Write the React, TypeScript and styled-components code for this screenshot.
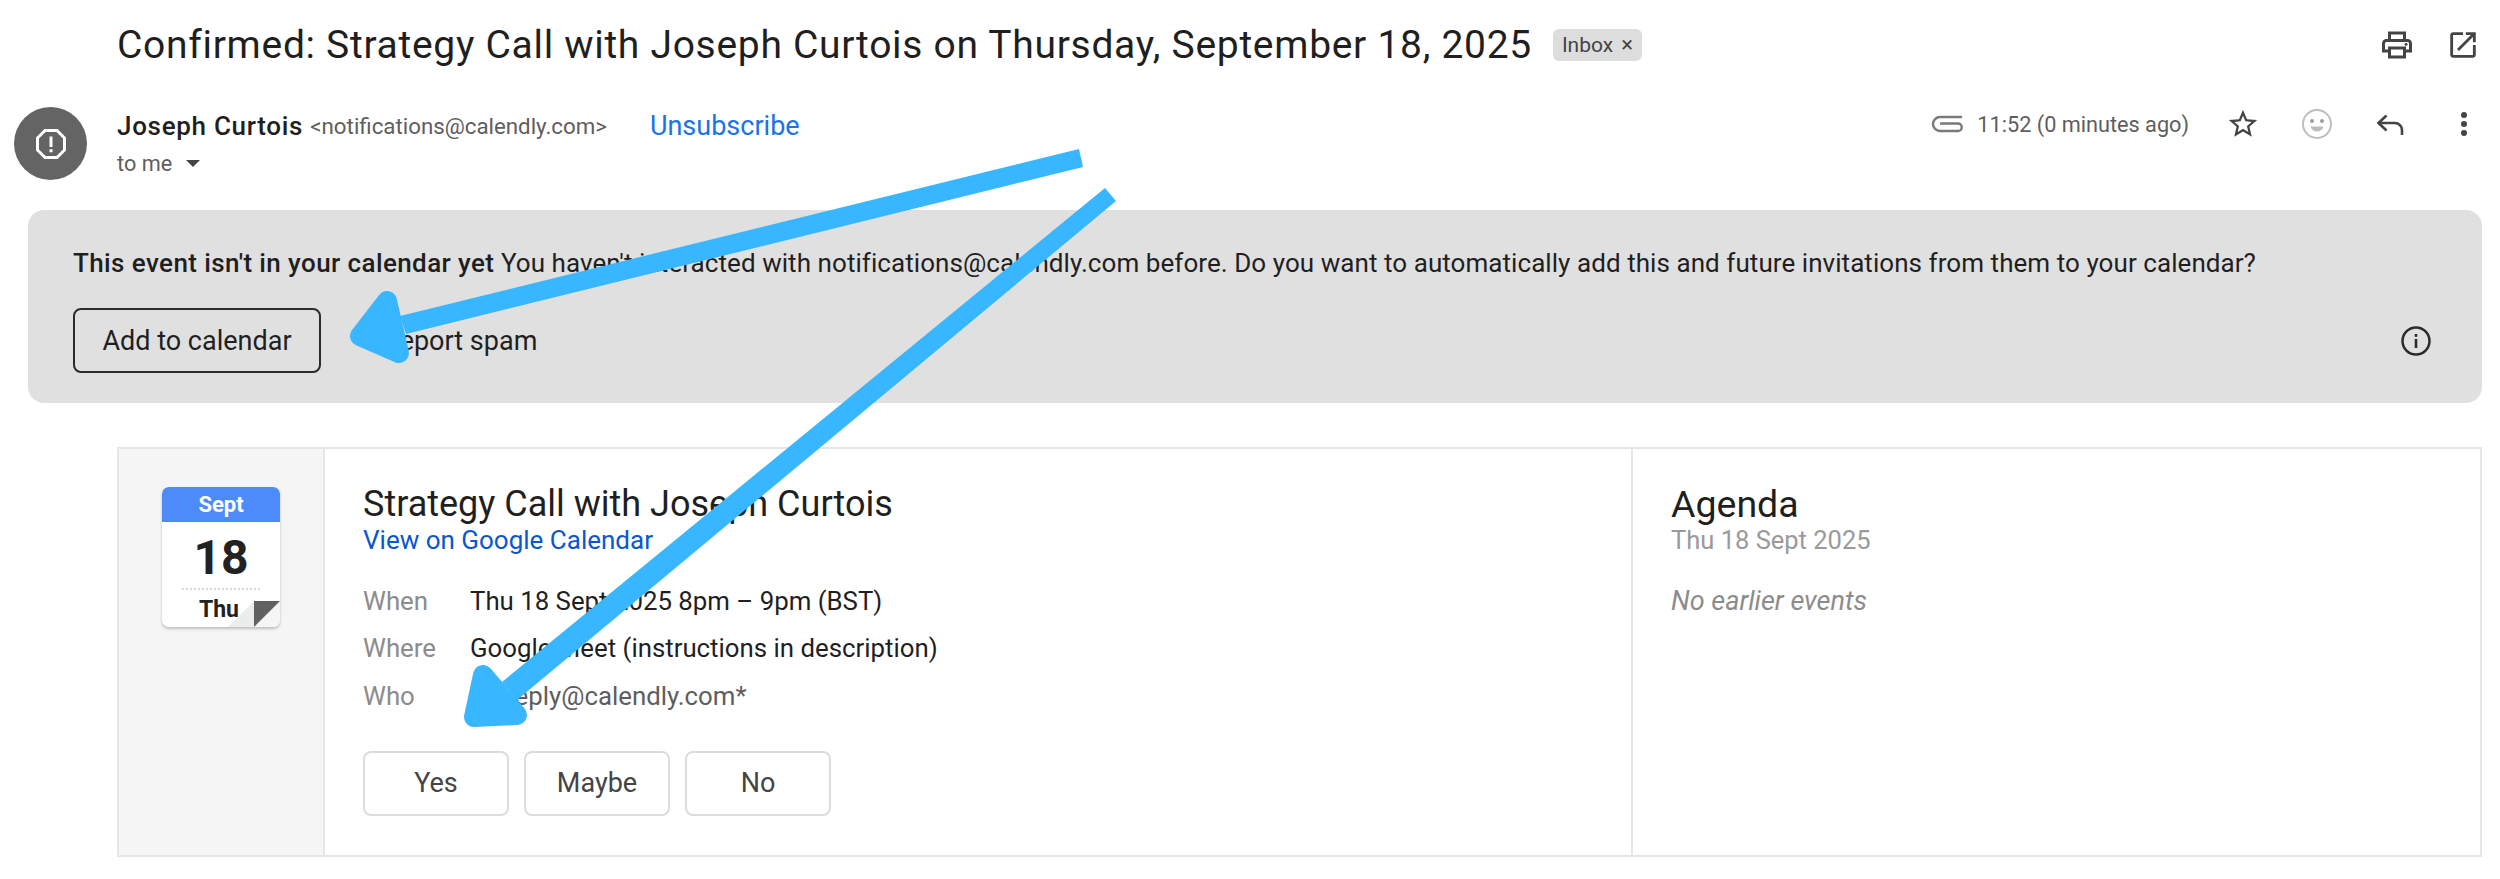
import React from 'react';
import styled, {createGlobalStyle} from 'styled-components';

const GlobalStyle = createGlobalStyle`
  html, body {
    margin: 0;
    padding: 0;
    background: #fff;
  }
  body {
    font-family: Roboto, "Noto Sans", "Liberation Sans", sans-serif;
    color: #1f1f1f;
  }
`;

const Page = styled.div`
  position: relative;
  width: 2500px;
  height: 879px;
  overflow: hidden;
  background: #fff;
`;

const SubjectRow = styled.div`
  height: 92px;
  display: flex;
  align-items: center;
  padding: 0 20px 3px 117px;
  box-sizing: border-box;
`;

const Subject = styled.h1`
  margin: 0;
  font-size: 39px;
  font-weight: 400;
  letter-spacing: 0.7px;
  color: #1f1f1f;
  white-space: nowrap;
`;

const Chip = styled.span`
  display: inline-flex;
  align-items: center;
  gap: 8px;
  height: 32px;
  margin-left: 21px;
  padding: 0 9px;
  border-radius: 6px;
  background: #dddddd;
  color: #444;
  font-size: 21px;
`;

const ChipClose = styled.span`
  font-size: 22px;
  line-height: 1;
`;

const TopActions = styled.div`
  margin-left: auto;
  display: flex;
  align-items: center;
  gap: 31px;
`;

const SenderRow = styled.div`
  height: 118px;
  display: flex;
  align-items: flex-start;
  padding: 15px 32px 0 14px;
  box-sizing: border-box;
`;

const Avatar = styled.div`
  flex: none;
  width: 73px;
  height: 73px;
  border-radius: 50%;
  background: #646464;
  display: flex;
  align-items: center;
  justify-content: center;
`;

const SenderInfo = styled.div`
  margin: 0 0 0 30px;
  display: flex;
  flex-direction: column;
  gap: 6px;
`;

const SenderLine = styled.div`
  height: 38px;
  display: flex;
  align-items: center;
  white-space: nowrap;
`;

const SenderName = styled.span`
  font-size: 26px;
  font-weight: 500;
  letter-spacing: 0.7px;
  color: #1f1f1f;
`;

const SenderEmail = styled.span`
  margin-left: 7px;
  font-size: 22.3px;
  color: #5e5e5e;
`;

const Unsubscribe = styled.a`
  margin-left: 43px;
  font-size: 27px;
  color: #1a73e8;
`;

const ToMe = styled.div`
  display: flex;
  align-items: center;
  gap: 14px;
  font-size: 21.7px;
  color: #5e5e5e;
`;

const Caret = styled.span`
  width: 0;
  height: 0;
  border-left: 7px solid transparent;
  border-right: 7px solid transparent;
  border-top: 7px solid #444;
`;

const MetaActions = styled.div`
  margin: -2px 0 0 auto;
  height: 38px;
  display: flex;
  align-items: center;
  gap: 37px;
`;

const TimeGroup = styled.div`
  display: flex;
  align-items: center;
  gap: 14px;
`;

const TimeText = styled.span`
  font-size: 21.7px;
  color: #5e5e5e;
  white-space: nowrap;
`;

const MessageIcons = styled.div`
  display: flex;
  align-items: center;
  gap: 41px;
`;

const MoreSlot = styled.span`
  display: flex;
  margin-left: 13px;
`;

const Banner = styled.section`
  height: 193px;
  margin: 0 18px 0 28px;
  padding: 37px 0 0 45px;
  box-sizing: border-box;
  border-radius: 16px;
  background: #e0e0e0;
`;

const BannerText = styled.p`
  margin: 0;
  height: 32px;
  line-height: 32px;
  font-size: 26px;
  letter-spacing: 0.06px;
  color: #1f1f1f;
  white-space: nowrap;
`;

const BannerStrong = styled.span`
  font-weight: 500;
  letter-spacing: 0.4px;
`;

const BannerActions = styled.div`
  margin-top: 29px;
  padding-right: 50px;
  display: flex;
  align-items: center;
`;

const AddButton = styled.button`
  width: 248px;
  height: 65px;
  padding: 0;
  border: 2px solid #2b2b2b;
  border-radius: 8px;
  background: transparent;
  font: 400 27px Roboto, sans-serif;
  color: #1f1f1f;
`;

const SpamLink = styled.span`
  margin-left: 62px;
  font-size: 27px;
  color: #1f1f1f;
`;

const InfoSlot = styled.span`
  margin-left: auto;
  display: flex;
`;

const Card = styled.section`
  height: 410px;
  margin: 44px 18px 0 117px;
  display: flex;
  border: 2px solid #e6e6e6;
  box-sizing: border-box;
`;

const DateCol = styled.div`
  flex: none;
  width: 206px;
  padding: 38px 0 0 43px;
  box-sizing: border-box;
  background: #f5f5f5;
  border-right: 2px solid #e6e6e6;
`;

const CalIcon = styled.div`
  position: relative;
  width: 118px;
  height: 140px;
  border-radius: 7px;
  background: #fff;
  box-shadow: 0 2px 3px rgba(0, 0, 0, 0.22);
  text-align: center;
  overflow: hidden;
`;

const CalMonth = styled.div`
  height: 35px;
  line-height: 35px;
  background: #4d8bfb;
  color: #fff;
  font-size: 22px;
  font-weight: 700;
`;

const CalDay = styled.div`
  height: 52px;
  margin-top: 10px;
  line-height: 52px;
  font-size: 48px;
  font-weight: 700;
  color: #222;
`;

const CalDots = styled.div`
  margin: 4px 20px 0;
  border-top: 2px dotted #d9d9d9;
`;

const CalWeekday = styled.div`
  margin-top: 6px;
  padding-right: 4px;
  font-size: 23px;
  font-weight: 700;
  color: #222;
`;

const CalFold = styled.svg`
  position: absolute;
  right: 0;
  bottom: 0;
`;

const EventCol = styled.div`
  flex: none;
  width: 1308px;
  padding: 37px 0 0 38px;
  box-sizing: border-box;
  border-right: 2px solid #e6e6e6;
`;

const CardTitle = styled.h2<{$size?: number}>`
  margin: 0;
  height: 37px;
  line-height: 37px;
  font-size: ${p => p.$size || 36}px;
  font-weight: 400;
  color: #1f1f1f;
  white-space: nowrap;
`;

const CalLink = styled.a`
  display: block;
  height: 34px;
  line-height: 34px;
  font-size: 26px;
  color: #0b57d0;
`;

const Details = styled.div`
  margin-top: 20px;
  display: grid;
  grid-template-columns: 107px 1fr;
  grid-auto-rows: 47.5px;
  align-items: center;
  font-size: 25.8px;
`;

const Label = styled.span`
  color: #8c8c8c;
`;

const Value = styled.span<{$muted?: boolean}>`
  color: ${p => (p.$muted ? '#5e5e5e' : '#1f1f1f')};
`;

const RsvpRow = styled.div`
  margin-top: 31px;
  display: flex;
  gap: 15px;
`;

const RsvpButton = styled.button`
  width: 146px;
  height: 65px;
  padding: 0;
  border: 2px solid #dcdce0;
  border-radius: 8px;
  background: #fff;
  font: 400 27px Roboto, sans-serif;
  color: #444;
`;

const AgendaCol = styled.div`
  flex: 1;
  padding: 37px 0 0 38px;
  box-sizing: border-box;
`;

const AgendaDate = styled.div`
  height: 34px;
  line-height: 34px;
  font-size: 25.5px;
  color: #9a9a9a;
`;

const NoEvents = styled.div`
  margin-top: 28px;
  font-size: 27px;
  font-style: italic;
  color: #8c8c8c;
`;

const ArrowLayer = styled.svg`
  position: absolute;
  left: 0;
  top: 0;
  pointer-events: none;
`;

const PrintIcon = () => (
  <svg width="36" height="36" viewBox="0 0 24 24" fill="#444">
    <path d="M19 8h-1V3H6v5H5c-1.66 0-3 1.34-3 3v6h4v4h12v-4h4v-6c0-1.66-1.34-3-3-3zM8 5h8v3H8V5zm8 12v2H8v-4h8v2zm2-2v-2H6v2H4v-4c0-.55.45-1 1-1h14c.55 0 1 .45 1 1v4h-2z"/>
    <circle cx="18" cy="11.5" r="1"/>
  </svg>
);

const OpenIcon = () => (
  <svg width="34" height="34" viewBox="0 0 24 24" fill="#444">
    <path d="M19 19H5V5h7V3H5c-1.11 0-2 .9-2 2v14c0 1.1.89 2 2 2h14c1.1 0 2-.9 2-2v-7h-2v7zM14 3v2h3.59l-9.83 9.83 1.41 1.41L19 6.41V10h2V3h-7z"/>
  </svg>
);

const AlertIcon = () => (
  <svg width="36" height="36" viewBox="0 0 24 24" fill="none">
    <path d="M8 3h8l5 5v8l-5 5H8l-5-5V8z" stroke="#fff" strokeWidth="2"/>
    <rect x="11" y="7" width="2" height="7" fill="#fff"/>
    <rect x="11" y="15.5" width="2" height="2" fill="#fff"/>
  </svg>
);

const ClipIcon = () => (
  <svg width="32" height="20" viewBox="0 0 32 20" fill="none" stroke="#7a7a7a" strokeWidth="2.4" strokeLinecap="round">
    <path d="M30 3H9a6.500 6.500 0 0 0 0 14h18"/>
    <path d="M27 17a3.600 3.600 0 0 0 0-7.500H10"/>
  </svg>
);

const StarIcon = () => (
  <svg width="34" height="34" viewBox="0 0 24 24" fill="#444">
    <path d="M22 9.240l-7.190-.62L12 2 9.190 8.630 2 9.240l5.460 4.730L5.820 21 12 17.270 18.180 21l-1.630-7.030L22 9.240zM12 15.400l-3.760 2.270 1-4.280-3.320-2.880 4.380-.38L12 6.100l1.710 4.040 4.380.38-3.320 2.880 1 4.280L12 15.400z"/>
  </svg>
);

const SmileIcon = () => (
  <svg width="32" height="32" viewBox="0 0 32 32" fill="none">
    <circle cx="16" cy="16" r="14" stroke="#bdbdbd" strokeWidth="2"/>
    <circle cx="11" cy="13" r="2" fill="#9e9e9e"/>
    <circle cx="21" cy="13" r="2" fill="#9e9e9e"/>
    <path d="M9.500 18.500h13c-1 3.500-3.500 5-6.500 5s-5.500-1.500-6.500-5z" fill="#bdbdbd"/>
  </svg>
);

const ReplyIcon = () => (
  <svg width="32" height="32" viewBox="0 0 32 32" fill="none" stroke="#444" strokeWidth="2.600">
    <path d="M12.500 7.500 4.500 15l8 7.500"/>
    <path d="M4.500 15H21a7 7 0 0 1 7 7v5"/>
  </svg>
);

const MoreIcon = () => (
  <svg width="8" height="26" viewBox="0 0 8 26" fill="#444">
    <circle cx="4" cy="4" r="3"/>
    <circle cx="4" cy="13" r="3"/>
    <circle cx="4" cy="22" r="3"/>
  </svg>
);

const InfoIcon = () => (
  <svg width="32" height="32" viewBox="0 0 32 32" fill="none">
    <circle cx="16" cy="16" r="13.500" stroke="#2b2b2b" strokeWidth="2.500"/>
    <rect x="14.700" y="14" width="2.600" height="9" fill="#2b2b2b"/>
    <rect x="14.700" y="9" width="2.600" height="2.800" fill="#2b2b2b"/>
  </svg>
);

const App = () => {
  return (
    <Page>
      <GlobalStyle/>
      <SubjectRow>
        <Subject>Confirmed: Strategy Call with Joseph Curtois on Thursday, September 18, 2025</Subject>
        <Chip>Inbox <ChipClose>×</ChipClose></Chip>
        <TopActions>
          <PrintIcon/>
          <OpenIcon/>
        </TopActions>
      </SubjectRow>

      <SenderRow>
        <Avatar><AlertIcon/></Avatar>
        <SenderInfo>
          <SenderLine>
            <SenderName>Joseph Curtois</SenderName>
            <SenderEmail>&lt;notifications@calendly.com&gt;</SenderEmail>
            <Unsubscribe>Unsubscribe</Unsubscribe>
          </SenderLine>
          <ToMe>to me <Caret/></ToMe>
        </SenderInfo>
        <MetaActions>
          <TimeGroup>
            <ClipIcon/>
            <TimeText>11:52 (0 minutes ago)</TimeText>
          </TimeGroup>
          <MessageIcons>
            <StarIcon/>
            <SmileIcon/>
            <ReplyIcon/>
            <MoreSlot><MoreIcon/></MoreSlot>
          </MessageIcons>
        </MetaActions>
      </SenderRow>

      <Banner>
        <BannerText>
          <BannerStrong>This event isn't in your calendar yet</BannerStrong> You haven't interacted with notifications@calendly.com before. Do you want to automatically add this and future invitations from them to your calendar?
        </BannerText>
        <BannerActions>
          <AddButton>Add to calendar</AddButton>
          <SpamLink>Report spam</SpamLink>
          <InfoSlot><InfoIcon/></InfoSlot>
        </BannerActions>
      </Banner>

      <Card>
        <DateCol>
          <CalIcon>
            <CalMonth>Sept</CalMonth>
            <CalDay>18</CalDay>
            <CalDots/>
            <CalWeekday>Thu</CalWeekday>
            <CalFold width="52" height="28" viewBox="0 0 52 28">
              <path d="M52 2v26H26z" fill="#f5f5f5"/>
              <path d="M0 28 26 2v26z" fill="#ececec"/>
              <path d="M26 2h26L26 28z" fill="#616161"/>
            </CalFold>
          </CalIcon>
        </DateCol>
        <EventCol>
          <CardTitle>Strategy Call with Joseph Curtois</CardTitle>
          <CalLink>View on Google Calendar</CalLink>
          <Details>
            <Label>When</Label>
            <Value>Thu 18 Sept 2025 8pm – 9pm (BST)</Value>
            <Label>Where</Label>
            <Value>Google Meet (instructions in description)</Value>
            <Label>Who</Label>
            <Value $muted>no-reply@calendly.com*</Value>
          </Details>
          <RsvpRow>
            <RsvpButton>Yes</RsvpButton>
            <RsvpButton>Maybe</RsvpButton>
            <RsvpButton>No</RsvpButton>
          </RsvpRow>
        </EventCol>
        <AgendaCol>
          <CardTitle $size={37.5}>Agenda</CardTitle>
          <AgendaDate>Thu 18 Sept 2025</AgendaDate>
          <NoEvents>No earlier events</NoEvents>
        </AgendaCol>
      </Card>

      <ArrowLayer width="2500" height="879" viewBox="0 0 2500 879">
        <g fill="#38b6ff" stroke="#38b6ff" strokeLinejoin="round">
          <path strokeWidth="0" d="M1079 149 1083 167 406 334 400 316z"/>
          <path strokeWidth="20" d="M360 336 387 301 399 353z"/>
          <path strokeWidth="0" d="M1105 188 1116 201 517 700 502 682z"/>
          <path strokeWidth="20" d="M474 717 483 675 517 715z"/>
        </g>
      </ArrowLayer>
    </Page>
  );
};

export default App;
